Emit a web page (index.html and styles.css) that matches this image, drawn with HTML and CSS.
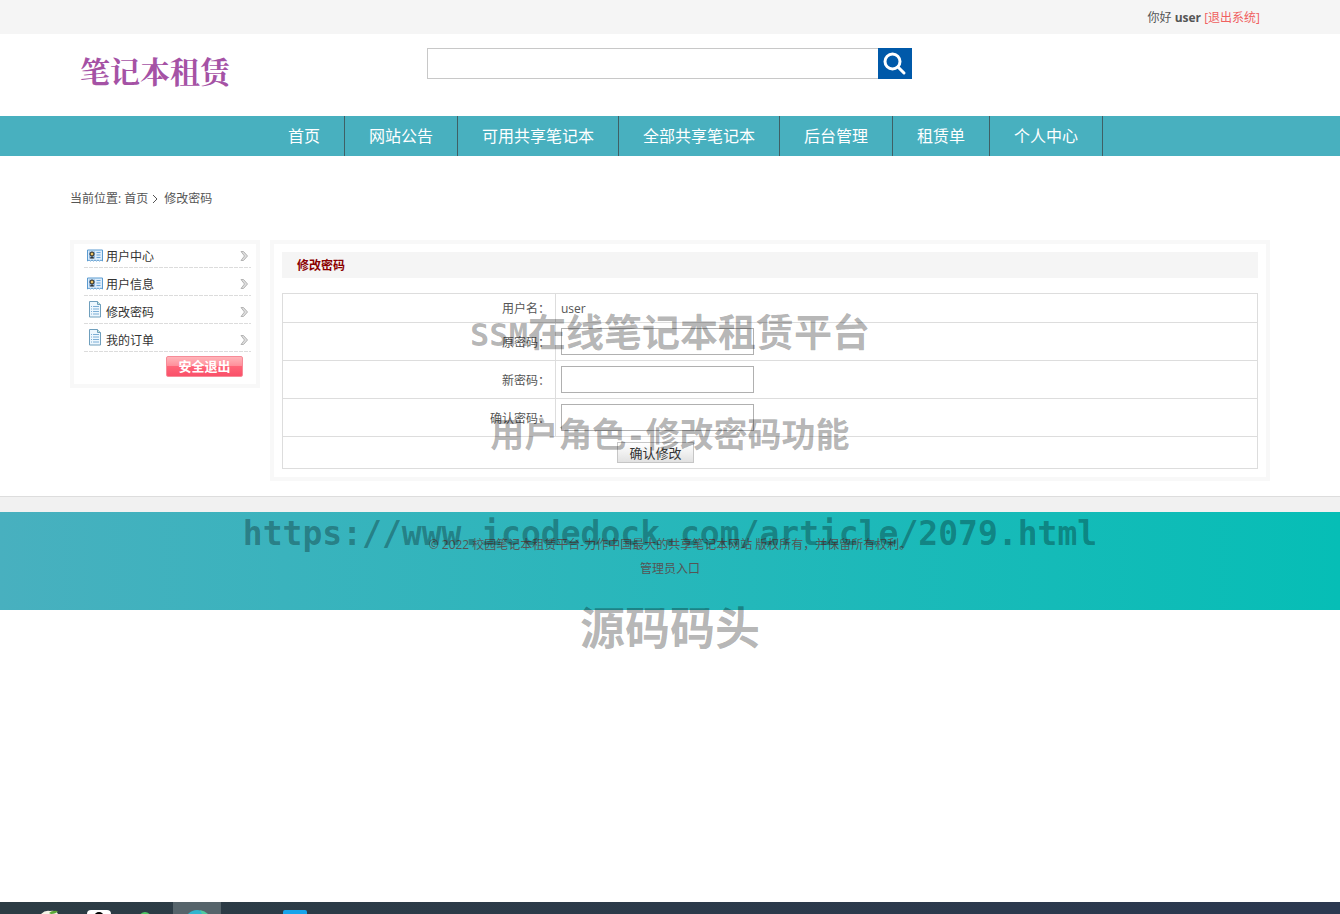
FILE: index.html
```html
<!DOCTYPE html>
<html lang="zh-CN">
<head>
<meta charset="utf-8">
<title>修改密码</title>
<link rel="stylesheet" href="styles.css">
</head>
<body>
<svg class="defs" width="0" height="0" aria-hidden="true">
  <symbol id="card" viewBox="0 0 16 14">
    <path d="M.5 1.500h15v11l-1.500-1-1.500 1-1.500-1-1.500 1-1.500-1-1.500 1-1.500-1-1.500 1-1.500-1-1.500 1z" fill="#dcecfb" stroke="#5b9bd0"/>
    <rect x="2" y="3" width="6" height="7" fill="#8fb6dc"/>
    <circle cx="5" cy="5.500" r="2" fill="#e8c064" stroke="#222"/>
    <path d="M3 10q0-2 2-2t2 2z" fill="#333"/>
    <path d="M9.500 4h4M9.500 6.500h4M9.500 9h4" stroke="#6aa5d8"/>
  </symbol>
  <symbol id="doc" viewBox="0 0 14 17">
    <path d="M1.500 .5h8l3 3v12.500h-11z" fill="#edf7fe" stroke="#6f9fbd"/>
    <path d="M9.500 .5v3h3" fill="#c7e6d9" stroke="#6f9fbd"/>
    <path d="M3 5.500h1M5 5.500h6M3 8h1M5 8h6M3 10.500h1M5 10.500h6M3 13h1M5 13h6" stroke="#7daed5"/>
  </symbol>
  <symbol id="arrow" viewBox="0 0 9 12">
    <path d="M1 1.500h2.500l4 4.500-4 4.500H1L4.500 6z" fill="#dedede" stroke="#b4b4b4"/>
  </symbol>
</svg>

<div class="topbar"><div class="wrap">你好 <b>user</b> <a href="#">[退出系统]</a></div></div>

<header class="header wrap">
  <a class="logo" href="#">笔记本租赁</a>
  <form class="search">
    <input type="text" aria-label="搜索">
    <button type="button" aria-label="搜索">
      <svg viewBox="0 0 34 31"><circle cx="14.500" cy="13.500" r="7.500"/><path d="M20 19l6 6"/></svg>
    </button>
  </form>
</header>

<nav class="nav">
  <a href="#">首页</a><a href="#">网站公告</a><a href="#">可用共享笔记本</a><a href="#">全部共享笔记本</a><a href="#">后台管理</a><a href="#">租赁单</a><a href="#">个人中心</a>
</nav>

<div class="crumb wrap">当前位置: <a href="#">首页</a><svg viewBox="0 0 6 10"><path d="M1 1l4 4-4 4"/></svg>修改密码</div>

<main class="main wrap">
  <aside class="side">
    <a class="item" href="#"><svg class="ico"><use href="#card"/></svg><span>用户中心</span><svg class="arrow"><use href="#arrow"/></svg></a>
    <a class="item" href="#"><svg class="ico"><use href="#card"/></svg><span>用户信息</span><svg class="arrow"><use href="#arrow"/></svg></a>
    <a class="item" href="#"><svg class="ico ico-doc"><use href="#doc"/></svg><span>修改密码</span><svg class="arrow"><use href="#arrow"/></svg></a>
    <a class="item" href="#"><svg class="ico ico-doc"><use href="#doc"/></svg><span>我的订单</span><svg class="arrow"><use href="#arrow"/></svg></a>
    <button class="logout" type="button">安全退出</button>
  </aside>
  <section class="panel">
    <h1>修改密码</h1>
    <form>
      <table>
        <tr><th scope="row">用户名：</th><td>user</td></tr>
        <tr class="field"><th scope="row"><label for="old">原密码：</label></th><td><input id="old" type="password"></td></tr>
        <tr class="field"><th scope="row"><label for="new">新密码：</label></th><td><input id="new" type="password"></td></tr>
        <tr class="field"><th scope="row"><label for="again">确认密码：</label></th><td><input id="again" type="password"></td></tr>
        <tr class="actions"><td colspan="2"><button type="button">确认修改</button></td></tr>
      </table>
    </form>
  </section>
</main>

<div class="strip"></div>
<footer class="footer">
  <p>© 2022 校园笔记本租赁平台-力作中国最大的共享笔记本网站 版权所有，并保留所有权利。</p>
  <p><a href="#">管理员入口</a></p>
</footer>

<div class="marks">
  <div class="mark mark-title"><span class="mono">SSM</span>在线笔记本租赁平台</div>
  <div class="mark mark-role">用户角色<span class="mono">-</span>修改密码功能</div>
  <div class="mark mark-url">https://www.icodedock.com/article/2079.html</div>
  <div class="mark mark-site">源码码头</div>
</div>

<div class="taskbar">
  <svg viewBox="0 0 320 12">
    <rect x="173" width="48" height="12" fill="#56646b"/>
    <path d="M41 12q4-4 9-3 6-1 8 3z" fill="#f4f5e9"/><path d="M49 11q3-3 9-2-2 3-7 3" fill="#5aa637"/>
    <rect x="87" y="8" width="24" height="12" rx="4" fill="#fff"/><circle cx="99" cy="15" r="5" fill="#000"/>
    <circle cx="145" cy="16" r="6" fill="#4cc764"/>
    <circle cx="197" cy="20" r="12" fill="#31b5ce"/><path d="M200 8q5 1 8 4h-6z" fill="#4fcba0"/>
    <rect x="283" y="8" width="24" height="12" rx="2" fill="#16a4eb"/>
  </svg>
</div>
</body>
</html>
```
FILE: styles.css
```css
* { box-sizing: border-box; }
body {
  position: relative;
  display: flex;
  flex-direction: column;
  min-height: 100vh;
  margin: 0;
  background: #fff;
  color: #555;
  font: 12px/24px "Open Sans", "Noto Sans CJK SC", sans-serif;
}
a { color: inherit; text-decoration: none; }
button, input { font: inherit; border-radius: 0; }
.defs { position: absolute; }
.wrap { width: 100%; max-width: 1200px; margin: 0 auto; }

.topbar { padding: 6px 0 4px; background: #f5f5f5; }
.topbar .wrap { padding-right: 10px; text-align: right; }
.topbar a { color: #f06060; }

.header { display: flex; align-items: flex-start; height: 82px; }
.logo {
  flex: 0 0 357px;
  padding: 16px 0 0 10px;
  color: #a552a5;
  font: 700 30px/40px "Noto Serif CJK SC", "Noto Sans CJK SC", serif;
}
.search { display: flex; flex: 0 0 485px; margin-top: 14px; }
.search input { flex: 1; height: 31px; padding: 0 8px; border: 1px solid #c8c8c8; border-right: 0; outline: 0; }
.search button { width: 34px; height: 31px; padding: 0; border: 0; background: #0059a9; }
.search svg { display: block; fill: none; stroke: #fff; stroke-width: 3; stroke-linecap: round; }

.nav { display: flex; justify-content: center; padding-left: 27px; background: #48b0bf; }
.nav a { padding: 0 24px; border-right: 1px solid #3f6065; color: #fff; font-size: 16px; line-height: 40px; }

.crumb { padding: 31px 0 29px; }
.crumb svg { width: 6px; height: 10px; margin: 0 6px 2px 4px; vertical-align: middle; fill: none; stroke: #555; }

.main { display: flex; align-items: flex-start; gap: 10px; margin-bottom: 15px; }
.side { display: flex; flex-direction: column; flex: 0 0 190px; padding: 0 5px 7px 10px; border: 4px solid #f8f8f8; }
.item { display: flex; align-items: center; height: 28px; padding-top: 4px; background: repeating-linear-gradient(90deg, #dcdcdc 0 4px, #fff 4px 5px) bottom / 100% 1px no-repeat; color: #333; }
.item:first-child { height: 24px; padding-top: 0; }
.item span { padding-top: 2px; }
.ico { width: 16px; height: 17px; margin: 0 3px 2px; }
.ico-doc { margin-bottom: 6px; }
.item .arrow { width: 9px; height: 12px; margin: 0 2px 0 auto; }
.logout {
  align-self: flex-end;
  width: 77px;
  height: 21px;
  margin: 4px 8px 0 0;
  padding: 0;
  border: 1px solid #f78b98;
  border-radius: 2px;
  background: linear-gradient(#ffb5ba, #ff8c98 50%, #ff6477 50%, #fa5069);
  color: #fff;
  font-size: 13px;
  font-weight: 700;
  line-height: 19px;
}
.panel { flex: 1; min-width: 0; padding: 8px; border: 4px solid #f8f8f8; }
.panel h1 { margin: 0 0 15px; padding: 2px 15px 0; background: #f5f5f5; color: #8b0000; font-size: 12px; line-height: 24px; }
table { width: 100%; border-collapse: collapse; }
th, td { height: 29px; padding: 2px 5px 0; border: 1px solid #ddd; font-weight: 400; text-align: left; }
th { width: 28%; text-align: right; }
.field th, .field td { height: 38px; }
.field td { padding-top: 0; }
td input { display: block; width: 193px; height: 27px; padding: 0 5px; border: 1px solid #b0b0b0; }
.actions td { height: 32px; padding: 5px 0 5px 334px; }
.actions button {
  display: block;
  width: 77px;
  height: 21px;
  padding: 1px 0 0;
  border: 1px solid #c6c6c6;
  background: linear-gradient(#fff, #e2e2e2);
  color: #333;
  font-size: 13px;
  line-height: 18px;
}

.strip { height: 16px; border-top: 1px solid #ddd; background: #f1f1f1; }
.footer { padding: 21px 0 29px; background: linear-gradient(90deg, #48b0bf, #06beb6); text-align: center; }
.footer p { margin: 0; }

/* Translucent captions lying over the page */
.marks { position: absolute; inset: 0; pointer-events: none; color: rgba(0, 0, 0, .3); font-family: "Noto Sans CJK SC", sans-serif; font-weight: 700; text-align: center; white-space: nowrap; }
.mark { position: absolute; left: 0; right: 0; }
.mono, .mark-url { font-family: "DejaVu Sans Mono", monospace; }
.mark-title { top: 310px; font-size: 38px; line-height: 40px; }
.mark-role { top: 413px; font-size: 34px; line-height: 40px; }
.mono { font-size: 32px; }
.mark-url { top: 514px; font-size: 33px; line-height: 40px; }
.mark-site { top: 598px; font-size: 45px; line-height: 56px; }

.taskbar { height: 12px; margin-top: auto; background: linear-gradient(90deg, #2c3c44, #2b3850); }
.taskbar svg { display: block; width: 320px; height: 12px; }
```
